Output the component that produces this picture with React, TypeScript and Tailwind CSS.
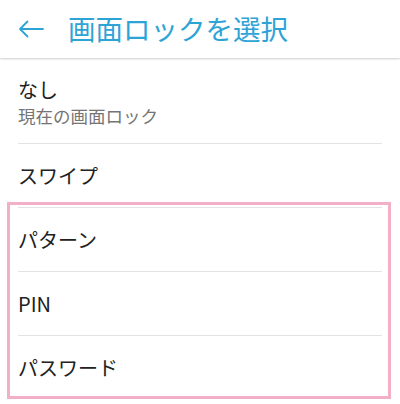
import React from "react";

const font = { fontFamily: '"Noto Sans CJK JP", "Noto Sans", Roboto, sans-serif' };

function Row({ title, sub, last }: { title: string; sub?: string; last?: boolean }) {
  return (
    <div className="mx-[18px]">
      <div className={sub ? "flex h-[85px] flex-col justify-center pt-[3px]" : "flex h-[63px] items-center"}>
        <div className="text-[20px] leading-[26px] text-[#212121]">{title}</div>
        {sub && <div className="text-[17.5px] leading-[25px] text-[#757575]">{sub}</div>}
      </div>
      {!last && <div className="h-px bg-[#e3e3e3]" />}
    </div>
  );
}

export default function App() {
  return (
    <div className="relative h-[404px] w-[400px] overflow-hidden bg-white" style={font}>
      <div className="relative z-10 flex h-[58px] items-center bg-white shadow-[0_1px_2px_rgba(0,0,0,0.2)]">
        <svg className="ml-[18px]" width="26" height="20" viewBox="0 0 26 20" fill="none">
          <path d="M2 10H25M9.5 2.5L2 10L9.5 17.5" stroke="#2ea3d6" strokeWidth="1.8" strokeLinecap="round" strokeLinejoin="round" />
        </svg>
        <div className="ml-[24px] text-[27.5px] leading-none text-[#2ea3d6]">画面ロックを選択</div>
      </div>
      <Row title="なし" sub="現在の画面ロック" />
      <Row title="スワイプ" />
      <Row title="パターン" />
      <Row title="PIN" />
      <Row title="パスワード" last />
      <div className="absolute left-[7px] top-[202px] h-[197px] w-[384px] border-[3px] border-[#f3afc8]" />
    </div>
  );
}
